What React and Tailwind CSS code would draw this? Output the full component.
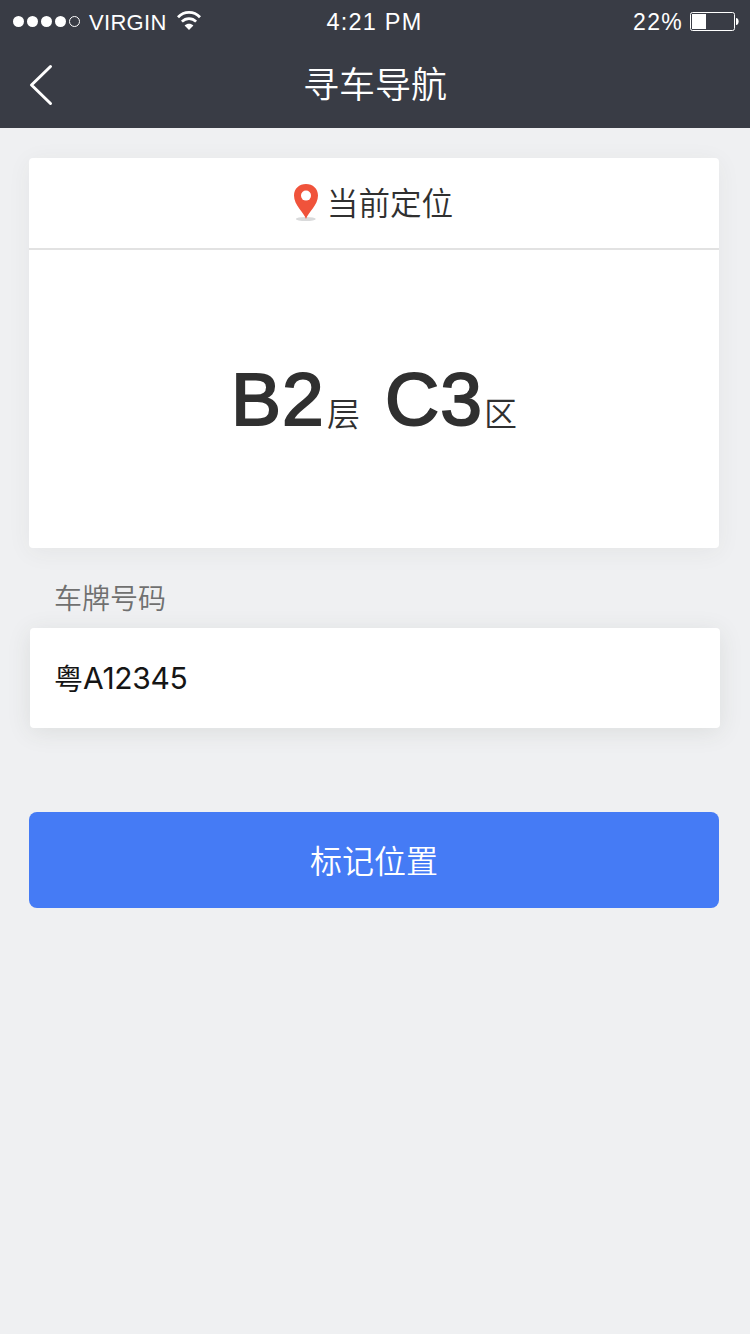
const cjk = "font-['Noto_Sans_CJK_SC',sans-serif]";
const latin = "font-['Liberation_Sans',sans-serif]";

function StatusBar() {
  return (
    <div className={`grid h-11 grid-cols-3 items-center pl-[13px] pr-[11px] text-[23px] leading-none ${latin}`}>
      <div className="flex items-center">
        <div className="-mt-px flex gap-[3px]">
          <span className="size-[11px] rounded-full bg-white" />
          <span className="size-[11px] rounded-full bg-white" />
          <span className="size-[11px] rounded-full bg-white" />
          <span className="size-[11px] rounded-full bg-white" />
          <span className="size-[11px] rounded-full border border-white" />
        </div>
        <span className="ml-[9px] w-[81px] pt-px text-[22px] tracking-[0.3px]">VIRGIN</span>
        <svg className="-mt-0.5 ml-[7px] shrink-0" width="24" height="20" viewBox="0 0 24 20" fill="none" stroke="white">
          <path d="M1 6.2C7.2-.2 16.8-.2 23 6.2" strokeWidth="2.8" />
          <path d="M4.9 10.6C9 6.6 15 6.6 19.1 10.6" strokeWidth="2.7" />
          <path d="M12 19L7.6 14.6C10.2 12.1 13.8 12.1 16.4 14.6Z" fill="white" stroke="none" />
        </svg>
      </div>
      <span className="-ml-[3px] pt-0.5 text-center text-[23.5px] tracking-[1.2px]">4:21 PM</span>
      <div className="flex items-center justify-end">
        <span className="tracking-[1.3px]">22%</span>
        <svg className="-mt-0.5 ml-[7px]" width="49" height="20" viewBox="0 0 49 20" fill="none">
          <rect x="0.5" y="1.5" width="44" height="18" rx="2" stroke="white" />
          <rect x="2" y="3" width="14" height="15" fill="white" />
          <path d="M46 7C49.5 7 49.5 14 46 14Z" fill="white" />
        </svg>
      </div>
    </div>
  );
}

function Header() {
  return (
    <header className="h-32 bg-[#393c45] text-white">
      <StatusBar />
      <div className="grid h-[84px] grid-cols-[72px_1fr_72px]">
        <svg className="ml-7 mt-[19px]" width="26" height="44" viewBox="0 0 26 44" fill="none" stroke="white" strokeWidth="3" strokeLinecap="round" strokeLinejoin="round">
          <path d="M22.5 3.5L3.5 22L22.5 40.5" />
        </svg>
        <h1 className={`pt-[18px] text-center text-[36px] font-[350] leading-10 ${cjk}`}>寻车导航</h1>
      </div>
    </header>
  );
}

function Pin() {
  return (
    <svg className="-mt-0.5" width="26" height="40" viewBox="0 0 26 40">
      <ellipse cx="12.8" cy="37" rx="10" ry="2" fill="#d9dadb" />
      <path d="M13 37C11 30.5 1 23.5 1 13.5C1 6.5 6.2 2 13 2S25 6.5 25 13.5C25 23.5 15 30.5 13 37Z" fill="#f0533b" />
      <circle cx="13" cy="13.6" r="5" fill="white" />
    </svg>
  );
}

export default function App() {
  return (
    <div className="min-h-[1334px] w-[750px] bg-[#eff0f2]">
      <Header />
      <main className={`px-[29px] pt-[30px] ${cjk}`}>
        <section className="h-[390px] w-[690px] rounded bg-white text-[#303030] shadow-[0_4px_24px_rgba(60,65,50,0.06)]">
          <div className="flex h-[92px] items-center justify-center gap-2 border-b-2 border-[#e2e2e2] pr-0.5">
            <Pin />
            <h2 className="pb-0.5 text-[31.6px] font-[350] leading-none">当前定位</h2>
          </div>
          <div className="flex items-baseline pl-[202px] pt-[109px] leading-[80px]">
            <span className={`w-[96px] text-[75px] tracking-[1px] [-webkit-text-stroke:2px_#303030] ${latin}`}>B2</span>
            <span className="relative top-px w-[58px] text-[33px] font-[350]">层</span>
            <span className={`w-[99px] text-[75px] tracking-[1px] [-webkit-text-stroke:2px_#303030] ${latin}`}>C3</span>
            <span className="relative top-px text-[33px] font-[350]">区</span>
          </div>
        </section>
        <label className="block h-20 pl-[25px] pt-[29px] text-[28px] font-[350] leading-10 text-[#707070]">车牌号码</label>
        <div className="ml-px flex h-[100px] w-[690px] items-center rounded bg-white pl-6 text-[#151515] shadow-[0_4px_24px_rgba(60,65,50,0.10)]">
          <span className="text-[29px]">粤</span>
          <span className="pt-px font-['Inter',sans-serif] text-[30px] tracking-[-0.3px]">A12345</span>
        </div>
        <button className="mt-[84px] flex h-24 w-[690px] items-center justify-center rounded-lg bg-[#457bf5] pb-[3px] text-[32px] font-[350] text-white">标记位置</button>
      </main>
    </div>
  );
}
